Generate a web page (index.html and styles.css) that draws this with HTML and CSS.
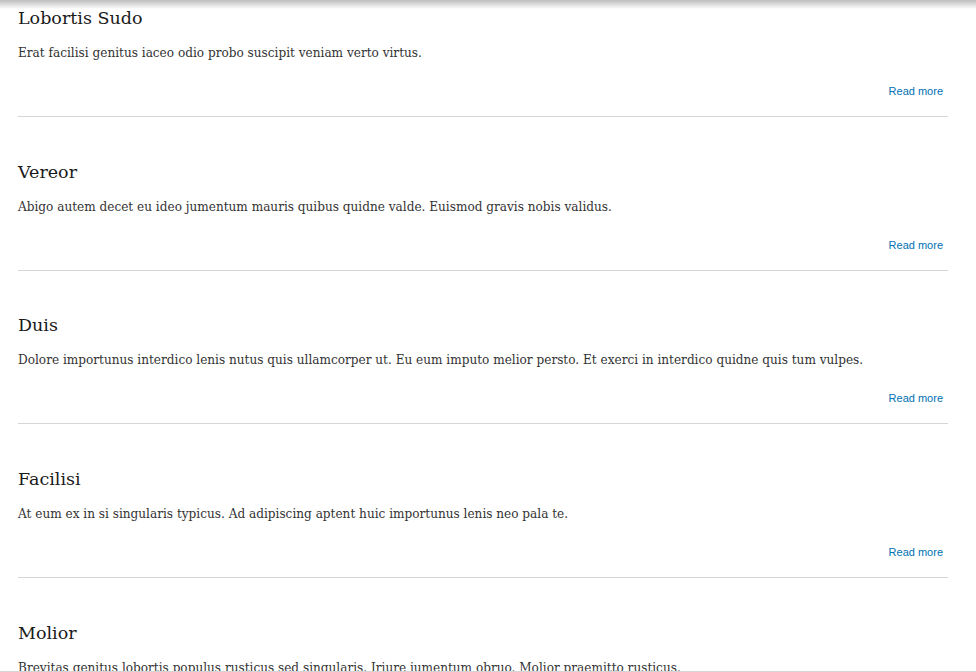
FILE: index.html
```html
<!DOCTYPE html>
<html>
<head>
  <meta charset="UTF-8">
  <meta name="viewport" content="width=device-width, initial-scale=1.0">
  <title>Articles</title>
  <link rel="stylesheet" href="styles.css">
</head>
<body>

  <div class="top-shadow"></div>

  <div class="content">
    <!-- article list -->
    <div class="node">
      <h2>Lobortis Sudo</h2>
      <p>Erat facilisi genitus iaceo odio probo suscipit veniam verto virtus.</p>
      <div class="links"><a href="#">Read more</a></div>
    </div>
    <div class="node">
      <h2>Vereor</h2>
      <p>Abigo autem decet eu ideo jumentum mauris quibus quidne valde. Euismod gravis nobis validus.</p>
      <div class="links"><a href="#">Read more</a></div>
    </div>
    <div class="node">
      <h2>Duis</h2>
      <p>Dolore importunus interdico lenis nutus quis ullamcorper ut. Eu eum imputo melior persto. Et exerci in interdico quidne quis tum vulpes.</p>
      <div class="links"><a href="#">Read more</a></div>
    </div>
    <div class="node">
      <h2>Facilisi</h2>
      <p>At eum ex in si singularis typicus. Ad adipiscing aptent huic importunus lenis neo pala te.</p>
      <div class="links"><a href="#">Read more</a></div>
    </div>
    <div class="node">
      <h2>Molior</h2>
      <p>Brevitas genitus lobortis populus rusticus sed singularis. Iriure jumentum obruo. Molior praemitto rusticus.</p>
      <div class="links"><a href="#">Read more</a></div>
    </div>
  </div>

  <div class="bottom-line"></div>

</body>
</html>
```

FILE: styles.css
```css
body {
  margin: 0;
  font-family: "DejaVu Serif", Georgia, serif;
  color: #333;
  background: #fff;
  overflow: hidden;
  height: 672px;
}
.top-shadow {
  position: fixed;
  top: 0;
  left: 0;
  right: 0;
  height: 9px;
  background: linear-gradient(#bdbdbd, rgba(255, 255, 255, 0));
}
.bottom-line {
  position: fixed;
  bottom: 0;
  left: 0;
  right: 0;
  height: 1px;
  background: #d4d4d4;
}
.content {
  padding: 0 28px 0 18px;
}
.node {
  padding: 42.67px 0 17px;
  border-bottom: 1px solid #d6d6d6;
}
.node:first-child {
  padding-top: 6px;
}
.node h2 {
  margin: 0 0 13px;
  font-size: 17.5px;
  line-height: 24px;
  font-weight: normal;
  color: #1a1a1a;
}
.node p {
  margin: 0;
  font-size: 12.1px;
  line-height: 20px;
}
.links {
  margin-top: 20px;
  text-align: right;
  padding-right: 5px;
  font-family: "Liberation Sans", Arial, sans-serif;
  font-size: 11px;
  line-height: 16px;
}
.links a {
  color: #0071b3;
  text-decoration: none;
}
```
